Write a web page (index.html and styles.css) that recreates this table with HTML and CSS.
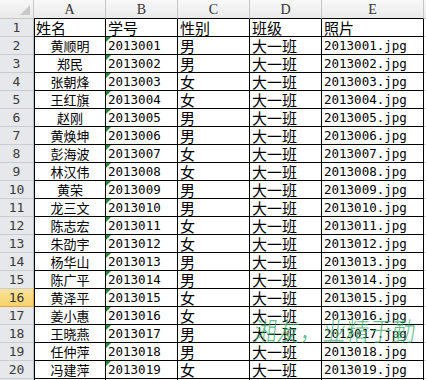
FILE: index.html
```html
<!DOCTYPE html>
<html lang="zh-CN">
<head>
<meta charset="utf-8">
<title>学生名单</title>
<link rel="stylesheet" href="styles.css">
</head>
<body>
<div class="wrap">
<div class="sheet">
  <div class="corner"></div>
  <div class="ch">A</div><div class="ch">B</div><div class="ch">C</div><div class="ch">D</div><div class="ch wide">E</div><div class="ch rest"></div>

  <div class="rh">1</div><div class="c first">姓名</div><div class="c">学号</div><div class="c">性别</div><div class="c">班级</div><div class="c">照片</div><div class="f"></div>
  <div class="rh">2</div><div class="c first name">黄顺明</div><div class="c num tri">2013001</div><div class="c">男</div><div class="c">大一班</div><div class="c num">2013001.jpg</div><div class="f"></div>
  <div class="rh">3</div><div class="c first name">郑民</div><div class="c num tri">2013002</div><div class="c">男</div><div class="c">大一班</div><div class="c num">2013002.jpg</div><div class="f"></div>
  <div class="rh">4</div><div class="c first name">张朝烽</div><div class="c num tri">2013003</div><div class="c">女</div><div class="c">大一班</div><div class="c num">2013003.jpg</div><div class="f"></div>
  <div class="rh">5</div><div class="c first name">王红旗</div><div class="c num tri">2013004</div><div class="c">女</div><div class="c">大一班</div><div class="c num">2013004.jpg</div><div class="f"></div>
  <div class="rh">6</div><div class="c first name">赵刚</div><div class="c num tri">2013005</div><div class="c">男</div><div class="c">大一班</div><div class="c num">2013005.jpg</div><div class="f"></div>
  <div class="rh">7</div><div class="c first name">黄焕坤</div><div class="c num tri">2013006</div><div class="c">男</div><div class="c">大一班</div><div class="c num">2013006.jpg</div><div class="f"></div>
  <div class="rh">8</div><div class="c first name">彭海波</div><div class="c num tri">2013007</div><div class="c">女</div><div class="c">大一班</div><div class="c num">2013007.jpg</div><div class="f"></div>
  <div class="rh">9</div><div class="c first name">林汉伟</div><div class="c num tri">2013008</div><div class="c">女</div><div class="c">大一班</div><div class="c num">2013008.jpg</div><div class="f"></div>
  <div class="rh">10</div><div class="c first name">黄荣</div><div class="c num tri">2013009</div><div class="c">男</div><div class="c">大一班</div><div class="c num">2013009.jpg</div><div class="f"></div>
  <div class="rh">11</div><div class="c first name">龙三文</div><div class="c num tri">2013010</div><div class="c">男</div><div class="c">大一班</div><div class="c num">2013010.jpg</div><div class="f"></div>
  <div class="rh">12</div><div class="c first name">陈志宏</div><div class="c num tri">2013011</div><div class="c">女</div><div class="c">大一班</div><div class="c num">2013011.jpg</div><div class="f"></div>
  <div class="rh">13</div><div class="c first name">朱劭宇</div><div class="c num tri">2013012</div><div class="c">女</div><div class="c">大一班</div><div class="c num">2013012.jpg</div><div class="f"></div>
  <div class="rh">14</div><div class="c first name">杨华山</div><div class="c num tri">2013013</div><div class="c">男</div><div class="c">大一班</div><div class="c num">2013013.jpg</div><div class="f"></div>
  <div class="rh">15</div><div class="c first name">陈广平</div><div class="c num tri">2013014</div><div class="c">男</div><div class="c">大一班</div><div class="c num">2013014.jpg</div><div class="f"></div>
  <div class="rh active">16</div><div class="c first name">黄泽平</div><div class="c num tri">2013015</div><div class="c">女</div><div class="c">大一班</div><div class="c num">2013015.jpg</div><div class="f"></div>
  <div class="rh">17</div><div class="c first name">姜小惠</div><div class="c num tri">2013016</div><div class="c">女</div><div class="c">大一班</div><div class="c num">2013016.jpg</div><div class="f"></div>
  <div class="rh">18</div><div class="c first name">王晓燕</div><div class="c num tri">2013017</div><div class="c">男</div><div class="c">大一班</div><div class="c num">2013017.jpg</div><div class="f"></div>
  <div class="rh">19</div><div class="c first name">任仲萍</div><div class="c num tri">2013018</div><div class="c">男</div><div class="c">大一班</div><div class="c num">2013018.jpg</div><div class="f"></div>
  <div class="rh">20</div><div class="c first name">冯建萍</div><div class="c num tri">2013019</div><div class="c">女</div><div class="c">大一班</div><div class="c num">2013019.jpg</div><div class="f"></div>
  <div class="rh"></div><div class="e first"></div><div class="e"></div><div class="e"></div><div class="e"></div><div class="e"></div><div class="f"></div>
</div>
<div class="watermark">湘友，业精于勤</div>
</div>
</body>
</html>
```
FILE: styles.css
```css
html, body {
  margin: 0;
  padding: 0;
  background: #ffffff;
  overflow: hidden;
}

.wrap {
  position: relative;
  width: 426px;
  height: 380px;
  overflow: hidden;
}

.sheet {
  display: grid;
  grid-template-columns: 34px 72px 72px 72px 72px 102px 4px;
  grid-template-rows: 19px repeat(21, 18px);
  font-family: "Noto Sans CJK SC", sans-serif;
  color: #000;
}

.sheet > div {
  box-sizing: border-box;
  min-width: 0;
  white-space: nowrap;
}

.corner {
  position: relative;
  background: linear-gradient(#f7f7f7, #e9e9e9);
  border-right: 1px solid #c6c6c6;
  border-bottom: 1px solid #c6c6c6;
}

.corner::after {
  content: "";
  position: absolute;
  right: 3px;
  bottom: 3px;
  width: 0;
  height: 0;
  border-left: 10px solid transparent;
  border-bottom: 10px solid #c8c8c8;
}

.ch {
  display: flex;
  align-items: center;
  justify-content: center;
  background: linear-gradient(#f8f8f8, #eaeaea);
  border-right: 1px solid #c6c6c6;
  border-bottom: 1px solid #000;
  font-family: "Liberation Serif", serif;
  font-size: 14px;
  line-height: 14px;
  color: #333;
  padding-top: 1px;
}

.ch.rest {
  border-bottom-color: #c6c6c6;
  border-right: none;
}

.rh {
  display: flex;
  align-items: center;
  justify-content: center;
  background: #e6e8ec;
  border-right: 1px solid #b9bcc1;
  border-bottom: 1px solid #c9ccd1;
  font-family: "DejaVu Sans Mono", monospace;
  font-size: 13px;
  line-height: 14px;
  color: #3a3a3a;
}

.rh.active {
  background: linear-gradient(#fbe39c, #f8d16a);
  border-right-color: #e5a43a;
  border-bottom-color: #e5a43a;
  color: #333;
}

.c, .e {
  position: relative;
  display: flex;
  align-items: flex-end;
  padding: 0 0 0 2px;
  border-right: 1px solid #000;
  border-bottom: 1px solid #000;
  font-size: 15px;
  line-height: 16px;
}

.first {
  border-left: 1px solid #000;
  padding-left: 1px;
}

.name {
  justify-content: center;
  font-size: 13px;
  line-height: 14px;
  padding-left: 0;
  padding-bottom: 1px;
}

.num {
  font-family: "DejaVu Sans Mono", monospace;
  font-size: 12.5px;
  padding-bottom: 2px;
  line-height: 13px;
}

.tri::before {
  content: "";
  position: absolute;
  left: 0;
  top: 0;
  width: 0;
  height: 0;
  border-top: 5px solid #1f8f2f;
  border-right: 5px solid transparent;
}

.f {
  border-bottom: 1px solid #d6d6d6;
}

.watermark {
  position: absolute;
  left: 256px;
  top: 316px;
  font-family: "Noto Sans CJK SC", sans-serif;
  font-weight: 300;
  font-size: 23px;
  line-height: 24px;
  color: rgba(55, 172, 105, 0.8);
  transform: skewX(-6deg) scaleY(1.15);
  transform-origin: left top;
  white-space: nowrap;
}
```
